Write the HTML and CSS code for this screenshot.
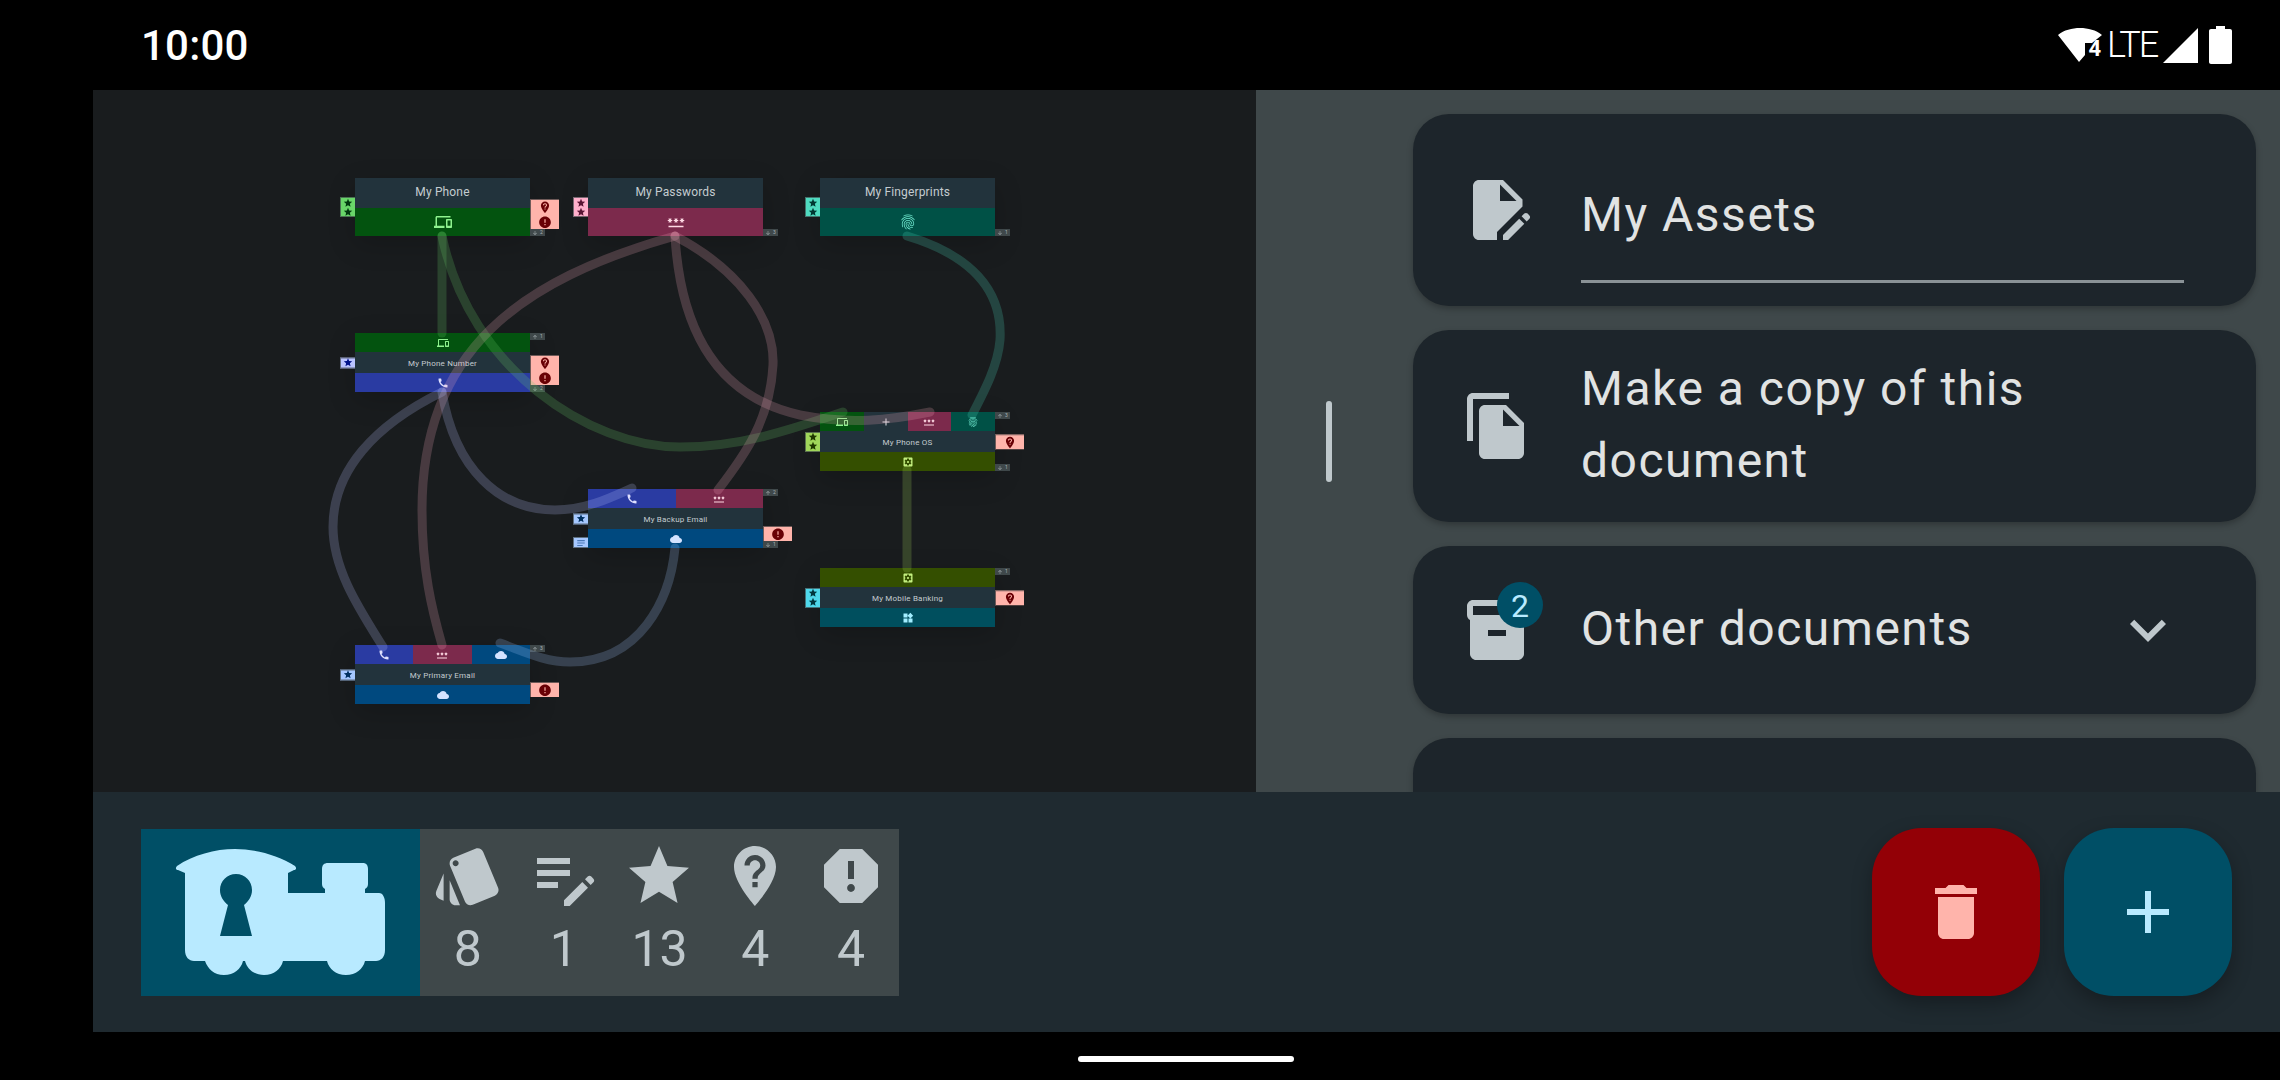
FILE: index.html
```html
<!DOCTYPE html>
<html lang="en">
<head>
  <meta charset="UTF-8" />
  <title>Document</title>
  <link rel="stylesheet" href="styles.css">
</head>
<body>

<!-- icon sprite -->
<svg class="sprite" xmlns="http://www.w3.org/2000/svg">
  <symbol id="i-star" viewBox="0 0 24 24"><path d="M12 17.27L18.18 21l-1.64-7.03L22 9.24l-7.19-.61L12 2 9.19 8.63 2 9.24l5.46 4.73L5.82 21z"/></symbol>
  <symbol id="i-error" viewBox="0 0 24 24"><path d="M12 2C6.48 2 2 6.48 2 12s4.48 10 10 10 10-4.48 10-10S17.52 2 12 2zm1 15h-2v-2h2v2zm0-4h-2V7h2v6z"/></symbol>
  <symbol id="i-pin" viewBox="0 0 24 24"><path d="M12 2C8.14 2 5 5.14 5 9c0 5.25 7 13 7 13s7-7.75 7-13c0-3.86-3.14-7-7-7zm.88 13.75h-1.75V14h1.75v1.75zm0-2.87h-1.75c0-2.84 2.62-2.62 2.62-4.38 0-.96-.79-1.75-1.75-1.75s-1.75.79-1.75 1.75H8.5C8.5 6.57 10.07 5 12 5s3.5 1.57 3.5 3.5c0 2.19-2.62 2.41-2.62 4.38z"/></symbol>
  <symbol id="i-report" viewBox="0 0 24 24"><path d="M15.73 3H8.27L3 8.27v7.46L8.27 21h7.46L21 15.73V8.27L15.73 3zM12 17.3c-.72 0-1.3-.58-1.3-1.3 0-.72.58-1.3 1.3-1.3.72 0 1.3.58 1.3 1.3 0 .72-.58 1.3-1.3 1.3zm1-4.3h-2V7h2v6z"/></symbol>
  <symbol id="i-devices" viewBox="0 0 24 24"><path d="M4 6h18V4H4c-1.1 0-2 .9-2 2v11H0v3h14v-3H4V6zm19 2h-6c-.55 0-1 .45-1 1v10c0 .55.45 1 1 1h6c.55 0 1-.45 1-1V9c0-.55-.45-1-1-1zm-1 9h-4v-7h4v7z"/></symbol>
  <symbol id="i-password" viewBox="0 0 24 24"><path d="M2 17h20v2H2v-2zm1.15-4.05L4 11.47l.85 1.48 1.3-.75-.85-1.48H7v-1.5H5.3l.85-1.47L4.85 7 4 8.47 3.15 7l-1.3.75.85 1.47H1v1.5h1.7l-.85 1.48 1.3.75zm6.7-.75 1.3.75.85-1.48.85 1.48 1.3-.75-.85-1.48H15v-1.5h-1.7l.85-1.47-1.3-.75L12 8.47 11.15 7l-1.3.75.85 1.47H9v1.5h1.7l-.85 1.48zM23 9.22h-1.7l.85-1.47-1.3-.75L20 8.47 19.15 7l-1.3.75.85 1.47H17v1.5h1.7l-.85 1.48 1.3.75.85-1.48.85 1.48 1.3-.75-.85-1.48H23v-1.5z"/></symbol>
  <symbol id="i-finger" viewBox="0 0 24 24"><path d="M17.81 4.47c-.08 0-.16-.02-.23-.06C15.66 3.42 14 3 12.01 3c-1.98 0-3.86.47-5.57 1.41-.24.13-.54.04-.68-.2-.13-.24-.04-.55.2-.68C7.82 2.52 9.86 2 12.01 2c2.13 0 3.99.47 6.03 1.52.25.13.34.43.21.67-.09.18-.26.28-.44.28zM3.5 9.72c-.1 0-.2-.03-.29-.09-.23-.16-.28-.47-.12-.7.99-1.4 2.25-2.5 3.75-3.27C9.98 4.04 14 4.03 17.15 5.65c1.5.77 2.76 1.86 3.75 3.25.16.22.11.54-.12.7-.23.16-.54.11-.7-.12-.9-1.26-2.04-2.25-3.39-2.94-2.87-1.47-6.54-1.47-9.4.01-1.36.7-2.5 1.7-3.4 2.96-.08.14-.23.21-.39.21zm6.25 12.07c-.13 0-.26-.05-.35-.15-.87-.87-1.34-1.43-2.01-2.64-.69-1.23-1.05-2.73-1.05-4.34 0-2.97 2.54-5.39 5.66-5.39s5.66 2.42 5.66 5.39c0 .28-.22.5-.5.5s-.5-.22-.5-.5c0-2.42-2.09-4.39-4.66-4.39-2.57 0-4.66 1.97-4.66 4.39 0 1.44.32 2.77.93 3.85.64 1.15 1.08 1.64 1.85 2.42.19.2.19.51 0 .71-.11.1-.24.15-.37.15zm7.17-1.85c-1.19 0-2.24-.3-3.1-.89-1.49-1.01-2.38-2.65-2.38-4.39 0-.28.22-.5.5-.5s.5.22.5.5c0 1.41.72 2.74 1.94 3.56.71.48 1.54.71 2.54.71.24 0 .64-.03 1.04-.1.27-.05.53.13.58.41.05.27-.13.53-.41.58-.57.11-1.07.12-1.21.12zM14.91 22c-.04 0-.09-.01-.13-.02-1.59-.44-2.63-1.03-3.72-2.1-1.4-1.39-2.17-3.24-2.17-5.22 0-1.62 1.38-2.94 3.08-2.94 1.7 0 3.08 1.32 3.08 2.94 0 1.07.93 1.94 2.08 1.94s2.08-.87 2.08-1.94c0-3.77-3.25-6.83-7.25-6.83-2.84 0-5.44 1.58-6.61 4.03-.39.81-.59 1.76-.59 2.8 0 .78.07 2.01.67 3.61.1.26-.03.55-.29.64-.26.1-.55-.04-.64-.29-.49-1.31-.73-2.61-.73-3.96 0-1.2.23-2.29.68-3.24 1.33-2.79 4.28-4.6 7.51-4.6 4.55 0 8.25 3.51 8.25 7.83 0 1.62-1.38 2.94-3.08 2.94s-3.08-1.32-3.08-2.94c0-1.07-.93-1.94-2.08-1.94s-2.08.87-2.08 1.94c0 1.71.66 3.31 1.87 4.51.95.94 1.86 1.46 3.27 1.85.27.07.42.35.35.61-.05.23-.26.38-.47.38z"/></symbol>
  <symbol id="i-call" viewBox="0 0 24 24"><path d="M20.01 15.38c-1.23 0-2.42-.2-3.53-.56-.35-.12-.74-.03-1.01.24l-1.57 1.97c-2.83-1.35-5.48-3.9-6.89-6.83l1.95-1.66c.27-.28.35-.67.24-1.02-.37-1.11-.56-2.3-.56-3.53 0-.54-.45-.99-.99-.99H4.19C3.65 3 3 3.24 3 3.99 3 13.28 10.73 21 20.01 21c.71 0 .99-.63.99-1.18v-3.45c0-.54-.45-.99-.99-.99z"/></symbol>
  <symbol id="i-cloud" viewBox="0 0 24 24"><path d="M19.35 10.04C18.67 6.59 15.64 4 12 4 9.11 4 6.6 5.64 5.35 8.04 2.34 8.36 0 10.91 0 14c0 3.31 2.69 6 6 6h13c2.76 0 5-2.24 5-5 0-2.64-2.05-4.78-4.65-4.96z"/></symbol>
  <symbol id="i-plus" viewBox="0 0 24 24"><path d="M19 13h-6v6h-2v-6H5v-2h6V5h2v6h6v2z"/></symbol>
  <symbol id="i-os" viewBox="0 0 24 24"><path d="M12 10c-1.1 0-2 .9-2 2s.9 2 2 2 2-.9 2-2-.9-2-2-2zm7-7H5c-1.1 0-2 .9-2 2v14c0 1.1.9 2 2 2h14c1.1 0 2-.9 2-2V5c0-1.1-.9-2-2-2zm-1.75 9c0 .23-.02.46-.05.68l1.48 1.16c.13.11.17.3.08.45l-1.4 2.42c-.09.15-.27.21-.43.15l-1.74-.7c-.36.28-.76.51-1.18.69l-.26 1.85c-.03.17-.18.3-.35.3h-2.8c-.17 0-.32-.13-.35-.29l-.26-1.85c-.43-.18-.82-.41-1.18-.69l-1.74.7c-.16.06-.34 0-.43-.15l-1.4-2.42c-.09-.15-.05-.34.08-.45l1.48-1.16c-.03-.23-.05-.46-.05-.69 0-.23.02-.46.05-.68l-1.48-1.16c-.13-.11-.17-.3-.08-.45l1.4-2.42c.09-.15.27-.21.43-.15l1.74.7c.36-.28.76-.51 1.18-.69l.26-1.85c.03-.17.18-.3.35-.3h2.8c.17 0 .32.13.35.29l.26 1.85c.43.18.82.41 1.18.69l1.74-.7c.16-.06.34 0 .43.15l1.4 2.42c.09.15.05.34-.08.45l-1.48 1.16c.03.23.05.46.05.69z"/></symbol>
  <symbol id="i-widgets" viewBox="0 0 24 24"><path d="M13 13v8h8v-8h-8zM3 21h8v-8H3v8zM3 3v8h8V3H3zm13.66-1.31L11 7.34 16.66 13l5.66-5.66-5.66-5.65z"/></symbol>
  <symbol id="i-note" viewBox="0 0 24 24"><path d="M3 5h18v2.5H3zM3 10.75h18v2.5H3zM3 16.5h13V19H3z"/></symbol>
  <symbol id="i-down" viewBox="0 0 24 24"><path d="M20 12l-1.41-1.41L13 16.17V4h-2v12.17l-5.58-5.59L4 12l8 8 8-8z"/></symbol>
  <symbol id="i-up" viewBox="0 0 24 24"><path d="M4 12l1.41 1.41L11 7.83V20h2V7.83l5.58 5.59L20 12l-8-8-8 8z"/></symbol>
  <symbol id="i-style" viewBox="0 0 24 24"><path d="M2.53 19.65l1.34.56v-9.03l-2.43 5.86c-.41 1.02.08 2.19 1.09 2.61zm19.5-3.7L17.07 3.98c-.31-.75-1.04-1.21-1.81-1.23-.26 0-.53.04-.79.15L7.1 5.95c-.75.31-1.21 1.03-1.23 1.8-.01.27.04.54.15.8l4.96 11.97c.31.76 1.05 1.22 1.83 1.23.26 0 .52-.05.77-.15l7.36-3.05c1.02-.42 1.51-1.59 1.09-2.6zM7.88 8.75c-.55 0-1-.45-1-1s.45-1 1-1 1 .45 1 1-.45 1-1 1zm-2 11c0 1.1.9 2 2 2h1.45l-3.45-8.34v6.34z"/></symbol>
  <symbol id="i-editnote" viewBox="0 0 24 24"><path d="M3 6h11v2H3zM3 10h11v2H3zM3 14h7v2H3zM12 22v-1.9l6.1-6.1 1.9 1.9L13.9 22zM19 13.1l.9-.9c.35-.35.9-.35 1.2 0l.7.7c.35.35.35.9 0 1.2l-.9.9z"/></symbol>
  <symbol id="i-editdoc" viewBox="0 0 24 24"><path fill-rule="evenodd" d="M6 2h8l6.5 6.5v2.3L12 19.3V22H6c-1.1 0-2-.9-2-2V4c0-1.1.9-2 2-2zM13 3.5V9h5.5z"/><path d="M14 22v-1.7l5.400-5.400 1.700 1.700-5.400 5.400zM20.200 14.100l.9-.9c.3-.3.8-.3 1.100 0l.6.6c.3.3.3.8 0 1.100l-.9.9z"/></symbol>
  <symbol id="i-copy" viewBox="0 0 24 24"><path d="M16 1H4c-1.1 0-2 .9-2 2v14h2V3h12V1zm-1 4l6 6v10c0 1.1-.9 2-2 2H7.99C6.89 23 6 22.1 6 21l.01-14c0-1.1.89-2 1.99-2h7zm-1 7h5.5L14 6.5V12z"/></symbol>
  <symbol id="i-archive" viewBox="0 0 24 24"><path d="M20 2H4c-1 0-2 .9-2 2v3.01c0 .72.43 1.34 1 1.69V20c0 1.1 1.1 2 2 2h14c.9 0 2-.9 2-2V8.7c.57-.35 1-.97 1-1.69V4c0-1.1-1-2-2-2zm-5 12H9v-2h6v2zm5-7H4V4l16-.02V7z"/></symbol>
  <symbol id="i-chevron" viewBox="0 0 24 24"><path d="M16.59 8.59L12 13.17 7.41 8.59 6 10l6 6 6-6z"/></symbol>
  <symbol id="i-delete" viewBox="0 0 24 24"><path d="M6 19c0 1.1.9 2 2 2h8c1.1 0 2-.9 2-2V7H6v12zM19 4h-3.5l-1-1h-5l-1 1H5v2h14V4z"/></symbol>
</svg>

<header class="statusbar">
  <span class="clock">10:00</span>
  <div class="status-icons">
    <span class="wifi">
      <svg viewBox="0 0 44 34"><path d="M0 7C6 2 14 0 22 0s16 2 22 7L34 15H27v12l-6 7z"/></svg>
      <b>4</b>
    </span>
    <span class="lte">LTE</span>
    <svg class="signal" viewBox="0 0 35 35"><path d="M35 0v35H0z"/></svg>
    <svg class="battery" viewBox="0 0 23 38"><path d="M7 0h9v3h5c1.1 0 2 .9 2 2v31c0 1.100-.9 2-2 2H2c-1.100 0-2-.9-2-2V5c0-1.100.9-2 2-2h5z"/></svg>
  </div>
</header>

<main class="app">
  <div class="top">
    <section class="canvas">

      <div class="node node-phone">
        <div class="tag-left tag-green"><svg class="star"><use href="#i-star"/></svg><svg class="star"><use href="#i-star"/></svg></div>
        <div class="row title">My Phone</div>
        <div class="row c-green"><svg class="ic"><use href="#i-devices"/></svg></div>
        <div class="tag-right"><svg class="alert"><use href="#i-pin"/></svg><svg class="alert"><use href="#i-error"/></svg></div>
        <div class="badge badge-down"><svg><use href="#i-down"/></svg>2</div>
      </div>

      <div class="node node-passwords">
        <div class="tag-left tag-pink"><svg class="star"><use href="#i-star"/></svg><svg class="star"><use href="#i-star"/></svg></div>
        <div class="row title">My Passwords</div>
        <div class="row c-pink"><svg class="ic"><use href="#i-password"/></svg></div>
        <div class="badge badge-down"><svg><use href="#i-down"/></svg>3</div>
      </div>

      <div class="node node-fingerprints">
        <div class="tag-left tag-teal"><svg class="star"><use href="#i-star"/></svg><svg class="star"><use href="#i-star"/></svg></div>
        <div class="row title">My Fingerprints</div>
        <div class="row c-teal"><svg class="ic"><use href="#i-finger"/></svg></div>
        <div class="badge badge-down"><svg><use href="#i-down"/></svg>1</div>
      </div>

      <div class="node node-small node-number">
        <div class="tag-left tag-blue"><svg class="star"><use href="#i-star"/></svg></div>
        <div class="row"><div class="slot c-green"><svg class="ic"><use href="#i-devices"/></svg></div></div>
        <div class="row title">My Phone Number</div>
        <div class="row c-blue"><svg class="ic"><use href="#i-call"/></svg></div>
        <div class="tag-right"><svg class="alert"><use href="#i-pin"/></svg><svg class="alert"><use href="#i-error"/></svg></div>
        <div class="badge badge-up"><svg><use href="#i-up"/></svg>1</div>
        <div class="badge badge-down"><svg><use href="#i-down"/></svg>2</div>
      </div>

      <div class="node node-small node-os">
        <div class="tag-left tag-olive"><svg class="star"><use href="#i-star"/></svg><svg class="star"><use href="#i-star"/></svg></div>
        <div class="row">
          <div class="slot c-green"><svg class="ic"><use href="#i-devices"/></svg></div>
          <div class="slot c-title"><svg class="ic"><use href="#i-plus"/></svg></div>
          <div class="slot c-pink"><svg class="ic"><use href="#i-password"/></svg></div>
          <div class="slot c-teal"><svg class="ic"><use href="#i-finger"/></svg></div>
        </div>
        <div class="row title">My Phone OS</div>
        <div class="row c-olive"><svg class="ic"><use href="#i-os"/></svg></div>
        <div class="tag-right tag-mid"><svg class="alert"><use href="#i-pin"/></svg></div>
        <div class="badge badge-up"><svg><use href="#i-up"/></svg>3</div>
        <div class="badge badge-down"><svg><use href="#i-down"/></svg>1</div>
      </div>

      <div class="node node-small node-banking">
        <div class="tag-left tag-cyan"><svg class="star"><use href="#i-star"/></svg><svg class="star"><use href="#i-star"/></svg></div>
        <div class="row"><div class="slot c-olive"><svg class="ic"><use href="#i-os"/></svg></div></div>
        <div class="row title">My Mobile Banking</div>
        <div class="row c-cyan"><svg class="ic"><use href="#i-widgets"/></svg></div>
        <div class="tag-right tag-mid"><svg class="alert"><use href="#i-pin"/></svg></div>
        <div class="badge badge-up"><svg><use href="#i-up"/></svg>1</div>
      </div>

      <div class="node node-small node-backup">
        <div class="tag-left tag-cloud"><svg class="star"><use href="#i-star"/></svg></div>
        <div class="tag-left tag-cloud tag-note"><svg class="star"><use href="#i-note"/></svg></div>
        <div class="row">
          <div class="slot c-blue"><svg class="ic"><use href="#i-call"/></svg></div>
          <div class="slot c-pink"><svg class="ic"><use href="#i-password"/></svg></div>
        </div>
        <div class="row title">My Backup Email</div>
        <div class="row c-cloud"><svg class="ic"><use href="#i-cloud"/></svg></div>
        <div class="tag-right"><svg class="alert"><use href="#i-error"/></svg></div>
        <div class="badge badge-up"><svg><use href="#i-up"/></svg>2</div>
        <div class="badge badge-down"><svg><use href="#i-down"/></svg>1</div>
      </div>

      <div class="node node-small node-primary">
        <div class="tag-left tag-cloud"><svg class="star"><use href="#i-star"/></svg></div>
        <div class="row">
          <div class="slot c-blue"><svg class="ic"><use href="#i-call"/></svg></div>
          <div class="slot c-pink"><svg class="ic"><use href="#i-password"/></svg></div>
          <div class="slot c-cloud"><svg class="ic"><use href="#i-cloud"/></svg></div>
        </div>
        <div class="row title">My Primary Email</div>
        <div class="row c-cloud"><svg class="ic"><use href="#i-cloud"/></svg></div>
        <div class="tag-right"><svg class="alert"><use href="#i-error"/></svg></div>
        <div class="badge badge-up"><svg><use href="#i-up"/></svg>3</div>
      </div>

      <!-- links between nodes, in screen coordinates -->
      <svg class="edges" viewBox="93 90 1163 702">
        <path class="e-green" d="M442 236V333"/>
        <path class="e-green" d="M442 236C470 370 590 447 680 447C740 447 790 430 843 412"/>
        <path class="e-pink" d="M675 236C520 280 422 350 422 510C422 570 432 610 442 645"/>
        <path class="e-pink" d="M675 236C680 320 710 395 800 415C850 425 890 420 930 412"/>
        <path class="e-pink" d="M675 236C740 270 775 320 773 365C770 420 745 455 718 490"/>
        <path class="e-teal" d="M907 236C970 255 1003 290 1000 340C998 365 985 390 972 415"/>
        <path class="e-olive" d="M907 470V568"/>
        <path class="e-blue" d="M442 392C455 470 500 510 555 510C585 510 610 498 632 488"/>
        <path class="e-blue" d="M442 392C375 425 333 470 333 527C333 570 360 610 383 647"/>
        <path class="e-cloud" d="M675 548C670 600 640 662 570 662C545 662 525 652 500 643"/>
      </svg>
    </section>

    <aside class="panel">
      <div class="handle-col"><div class="handle"></div></div>
      <div class="cards">
        <div class="card card-assets">
          <svg class="card-icon"><use href="#i-editdoc"/></svg>
          <div class="field">My Assets</div>
        </div>
        <div class="card">
          <svg class="card-icon"><use href="#i-copy"/></svg>
          <div class="card-text">Make a copy of this document</div>
        </div>
        <div class="card card-other">
          <div class="icon-wrap">
            <svg class="card-icon"><use href="#i-archive"/></svg>
            <span class="count">2</span>
          </div>
          <div class="card-text">Other documents</div>
          <svg class="chevron"><use href="#i-chevron"/></svg>
        </div>
        <div class="card"></div>
      </div>
    </aside>
  </div>

  <footer class="bottombar">
    <div class="summary">
      <div class="logo">
        <svg viewBox="0 0 279 167">
          <path fill-rule="evenodd" d="M44 44L37 41c-2 0-3-2-1-4C52 26 74 20 94 20s43 6 60 17c2 2 1 4-1 4l-6 3V64h37v-4c-2-1-3-3-3-5V40c0-4 2-6 6-6h35c3 0 5 2 5 6v15c0 2-1 4-3 5v4h14c4 0 6 5 6 10v47c0 7-4 11-9 11h-11c-2 8-9 14-19 14s-17-6-19-14h-44c-2 8-9 14-19 14s-17-6-19-14h-2c-2 8-9 14-19 14s-16-6-19-14h-11c-5 0-9-4-9-11zM79 61c0 6 3 11 8 15l-8 31h32l-8-31c5-4 8-9 8-15 0-9-7-16-16-16s-16 7-16 16z"/>
        </svg>
      </div>
      <div class="stats">
        <div class="stat"><svg><use href="#i-style"/></svg><span>8</span></div>
        <div class="stat"><svg><use href="#i-editnote"/></svg><span>1</span></div>
        <div class="stat"><svg><use href="#i-star"/></svg><span>13</span></div>
        <div class="stat"><svg><use href="#i-pin"/></svg><span>4</span></div>
        <div class="stat"><svg><use href="#i-report"/></svg><span>4</span></div>
      </div>
    </div>
    <div class="fabs">
      <button class="fab fab-delete"><svg><use href="#i-delete"/></svg></button>
      <button class="fab fab-add"><svg><use href="#i-plus"/></svg></button>
    </div>
  </footer>
</main>

<div class="gesture"><div class="pill"></div></div>

</body>
</html>
```

FILE: styles.css
```css
* { box-sizing: border-box; }
html, body { margin: 0; height: 100%; }
body { width: 2280px; height: 1080px; overflow: hidden; background: #000; font-family: Roboto, sans-serif; display: flex; flex-direction: column; }
.sprite { display: none; }
svg { fill: currentColor; display: block; }

/* status bar */
.statusbar { height: 90px; display: flex; align-items: center; justify-content: space-between; padding: 0 48px 0 141px; color: #fff; }
.clock { font-size: 42px; font-weight: 500; letter-spacing: .2px; }
.status-icons { display: flex; align-items: center; }
.wifi { position: relative; width: 44px; height: 34px; margin-right: 5px; }
.wifi svg { width: 44px; height: 34px; }
.wifi b { position: absolute; right: 1px; bottom: 3px; font-size: 22px; line-height: 20px; font-weight: 700; }
.lte { font-size: 36px; line-height: 40px; width: 48px; margin-right: 8px; letter-spacing: -2px; font-weight: 300; }
.signal { width: 35px; height: 35px; margin-right: 11px; }
.battery { width: 23px; height: 38px; }

.app { height: 942px; margin-left: 93px; display: flex; flex-direction: column; }
.top { height: 702px; display: flex; }

/* graph canvas */
.canvas { position: relative; width: 1163px; background: #191c1e; overflow: hidden; }
.edges { position: absolute; left: 0; top: 0; width: 1163px; height: 702px; z-index: 3; fill: none; stroke-width: 9; stroke-linecap: round; pointer-events: none; }
.edges path { fill: none; stroke-opacity: .22; }
.e-green { stroke: #69cc69; }
.e-pink { stroke: #f0a8bc; }
.e-blue { stroke: #bac3ff; }
.e-cloud { stroke: #a6c8ff; }
.e-teal { stroke: #4fdbc0; }
.e-olive { stroke: #a5d65a; }

.node { position: absolute; width: 175px; height: 58px; display: flex; flex-direction: column; box-shadow: 0 8px 28px rgba(0,0,0,.18); }
.node-small { height: 59px; }
.node-phone { left: 262px; top: 88px; }
.node-passwords { left: 495px; top: 88px; }
.node-fingerprints { left: 727px; top: 88px; }
.node-number { left: 262px; top: 243px; }
.node-os { left: 727px; top: 322px; }
.node-banking { left: 727px; top: 478px; }
.node-backup { left: 495px; top: 399px; }
.node-primary { left: 262px; top: 555px; }

.row { flex: 1; display: flex; align-items: center; justify-content: center; min-height: 0; }
.slot { flex: 1; align-self: stretch; display: flex; align-items: center; justify-content: center; }
.title { background: #22333c; color: #c4ccd0; font-size: 12px; letter-spacing: .15px; padding-bottom: 2px; }
.node-small .title { font-size: 8px; letter-spacing: .2px; padding: 2px 0 0; }
.ic { width: 18px; height: 18px; }
.node-small .ic { width: 12px; height: 12px; }

.c-title { background: #22333c; color: #dfe3e7; }
.c-green { background: #03530f; color: #8ef28e; }
.c-pink { background: #7c2a4c; color: #ffd9e4; }
.c-teal { background: #005146; color: #6fe8cf; }
.c-blue { background: #2a3ba2; color: #dfe0ff; }
.c-cloud { background: #00497f; color: #d4e3ff; }
.c-olive { background: #344f00; color: #c3ef7f; }
.c-cyan { background: #004f5e; color: #a2eeff; }

.tag-left { position: absolute; right: 100%; top: 50%; transform: translateY(-50%); width: 15px; display: flex; flex-direction: column; align-items: center; border: 1px solid rgba(63,72,74,.7); border-right: none; }
.tag-note { top: auto; bottom: 0; transform: none; }
.star { width: 10px; height: 10px; margin: -.5px 0; }
.tag-green { background: #69d669; color: #00390f; }
.tag-pink { background: #ffb0cc; color: #5a1535; }
.tag-teal { background: #4fdbc0; color: #003731; }
.tag-blue { background: #bac3ff; color: #00128a; }
.tag-cloud { background: #a6c8ff; color: #003060; }
.tag-note { color: #4a78b8; }
.tag-olive { background: #a0d65a; color: #1f3700; }
.tag-cyan { background: #4fd8eb; color: #00363d; }

.tag-right { position: absolute; left: 100%; bottom: 7px; width: 29px; background: #ffb4ab; color: #690005; display: flex; flex-direction: column; align-items: center; border-top: 1px solid #6f5a58; border-left: 1px solid #6f5a58; }
.tag-mid { bottom: auto; top: 50%; transform: translateY(-50%); }
.alert { width: 14px; height: 14.5px; }

.badge { position: absolute; left: 100%; width: 15px; height: 7px; background: #3f484a; color: #aab2b5; font-size: 5px; line-height: 7px; display: flex; align-items: center; justify-content: center; gap: 2px; }
.badge svg { width: 6px; height: 6px; }
.badge-up { top: 0; }
.badge-down { bottom: 0; }

/* right panel */
.panel { flex: 1; display: flex; background: #3f484a; overflow: hidden; }
.handle-col { width: 157px; flex: none; display: flex; align-items: center; padding-left: 70px; }
.handle { width: 6px; height: 81px; background: #bfc8cc; border-radius: 3px; }
.cards { flex: 1; padding: 24px 24px 0 0; display: flex; flex-direction: column; gap: 24px; }
.card { flex: none; height: 192px; background: #1d252b; border-radius: 36px; display: flex; align-items: center; padding: 0 72px 0 48px; color: #e1e3e3; font-size: 48px; line-height: 72px; letter-spacing: 1.5px; box-shadow: 0 3px 6px rgba(0,0,0,.25); }
.card-other { height: 168px; }
.card-assets { align-items: flex-start; }
.card-assets .card-icon { margin-top: 60px; }
.card-icon { width: 72px; height: 72px; flex: none; color: #bfc8cc; }
.field { flex: 1; margin: 65px 0 0 48px; padding-bottom: 29px; border-bottom: 3px solid #8a9296; }
.card-text { flex: 1; margin-left: 48px; padding-bottom: 3px; }
.icon-wrap { position: relative; flex: none; }
.count { position: absolute; left: 36px; top: -12px; width: 46px; height: 46px; border-radius: 50%; background: #004f66; color: #b8eaff; font-size: 32px; line-height: 48px; text-align: center; letter-spacing: 0; }
.chevron { width: 72px; height: 72px; flex: none; color: #bfc8cc; }

/* bottom bar */
.bottombar { flex: 1; background: #1f2a30; display: flex; align-items: center; justify-content: space-between; padding: 0 48px; }
.summary { display: flex; height: 167px; }
.logo { width: 279px; background: #004f66; color: #b8eaff; }
.logo svg { width: 279px; height: 167px; }
.stats { width: 479px; background: #3f484a; display: flex; padding-top: 11px; color: #bfc8cc; }
.stat { flex: 1; display: flex; flex-direction: column; align-items: center; }
.stat svg { width: 72px; height: 72px; }
.stat span { font-size: 50px; line-height: 56px; margin-top: 9px; }
.fabs { display: flex; gap: 24px; }
.fab { width: 168px; height: 168px; border: none; border-radius: 50px; padding: 48px; box-shadow: 0 8px 20px rgba(0,0,0,.3); }
.fab svg { width: 72px; height: 72px; }
.fab-delete { background: #930006; color: #ffb4ab; }
.fab-add { background: #004f66; color: #b8eaff; }

.gesture { flex: 1; display: flex; align-items: center; justify-content: flex-end; padding: 6px 986px 0 0; }
.pill { width: 216px; height: 6px; border-radius: 3px; background: #fff; }
```
